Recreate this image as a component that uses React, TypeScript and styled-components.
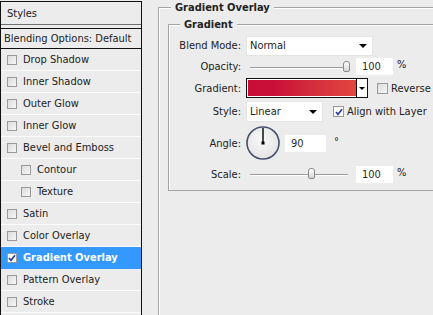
import React from "react";
import styled, { createGlobalStyle } from "styled-components";

const Global = createGlobalStyle`
  html, body { margin: 0; padding: 0; }
  body {
    background: #ececec;
    width: 433px;
    height: 315px;
    overflow: hidden;
    font-family: "DejaVu Sans Condensed", "Liberation Sans", sans-serif;
    font-size: 11px;
    color: #222;
  }
`;

const Page = styled.div`
  display: flex;
  width: 433px;
  height: 315px;
  overflow: hidden;
`;

/* ---------- left styles list ---------- */

const StylesPanel = styled.nav`
  flex: 0 0 142px;
  box-sizing: border-box;
  margin-top: 1px;
  border-left: 1px solid #111;
  border-right: 1px solid #111;
  display: flex;
  flex-direction: column;
`;

const PanelHeader = styled.div`
  height: 22px;
  border-top: 1px solid #111;
  border-bottom: 1px solid #6e6e6e;
  display: flex;
  align-items: center;
  padding-left: 6px;
  margin-bottom: 3px;
`;

const BlendingRow = styled.div`
  height: 19px;
  border-top: 1px solid #111;
  border-bottom: 1px solid #111;
  display: flex;
  align-items: center;
  padding-left: 3px;
  white-space: nowrap;
`;

const EffectRow = styled.div<{ $indent?: boolean; $active?: boolean }>`
  box-sizing: border-box;
  height: 22px;
  display: flex;
  align-items: center;
  gap: 6px;
  padding-left: ${(p) => (p.$indent ? 20 : 6)}px;
  border-bottom: 1px solid ${(p) => (p.$active ? "#3399ff" : "#fbfbfb")};
  background: ${(p) => (p.$active ? "#3399ff" : "transparent")};
  color: ${(p) => (p.$active ? "#fff" : "#222")};
  font-weight: ${(p) => (p.$active ? "bold" : "normal")};
  white-space: nowrap;
`;

const Box = styled.span<{ $on?: boolean; $size?: number }>`
  box-sizing: border-box;
  flex: 0 0 auto;
  width: ${(p) => p.$size ?? 10}px;
  height: ${(p) => p.$size ?? 10}px;
  border: 1px solid #9a9a9a;
  background: ${(p) => (p.$on ? "#fff" : "linear-gradient(135deg, #dcdcdc, #f6f6f6)")};
  display: inline-flex;
  align-items: center;
  justify-content: center;
`;

const Check = ({ on, size }: { on?: boolean; size?: number }) => (
  <Box $on={on} $size={size}>
    {on && (
      <svg width="8" height="8" viewBox="0 0 8 8">
        <path d="M1 4 L3 6.3 L7 1.2" fill="none" stroke="#2b3f9a" strokeWidth="1.7" />
      </svg>
    )}
  </Box>
);

/* ---------- right settings ---------- */

const Settings = styled.section`
  flex: 1 1 auto;
  min-width: 0;
  margin-left: 16px;
`;

const Group = styled.fieldset<{ $top: number; $pad: string; $h?: number }>`
  margin: ${(p) => p.$top}px -20px 0 0;
  padding: ${(p) => p.$pad};
  border: 1px solid #a4a4a4;
  box-shadow: inset 1px 1px 0 #fff;
  min-width: 0;
  ${(p) => (p.$h ? `height: ${p.$h}px;` : "")}
`;

const Legend = styled.legend<{ $offset: number }>`
  margin-left: ${(p) => p.$offset}px;
  padding: 0 4px;
  font-weight: bold;
  line-height: 13px;
  background: #ececec;
`;

const FormRow = styled.div<{ $h: number }>`
  display: grid;
  grid-template-columns: 72px auto;
  column-gap: 5px;
  align-items: center;
  height: ${(p) => p.$h}px;
`;

const Label = styled.span`
  text-align: right;
  white-space: nowrap;
`;

const Controls = styled.div`
  display: flex;
  align-items: center;
  white-space: nowrap;
`;

const Select = styled.div<{ $w: number; $h: number }>`
  box-sizing: border-box;
  width: ${(p) => p.$w}px;
  height: ${(p) => p.$h}px;
  background: #fff;
  border: 1px solid #e4e4e4;
  display: flex;
  align-items: center;
  justify-content: space-between;
  padding: 0 5px 0 3px;
`;

const Arrow = styled.span<{ $s?: number }>`
  width: 0;
  height: 0;
  border-left: ${(p) => p.$s ?? 4}px solid transparent;
  border-right: ${(p) => p.$s ?? 4}px solid transparent;
  border-top: ${(p) => p.$s ?? 4}px solid #000;
`;

const Slider = styled.div`
  position: relative;
  width: 104px;
  height: 14px;
  &::before {
    content: "";
    position: absolute;
    left: 4px;
    right: 2px;
    top: 7px;
    height: 1px;
    background: #9a9a9a;
    border-bottom: 1px solid #fff;
  }
`;

const Thumb = styled.span`
  position: absolute;
  top: 1px;
  width: 7px;
  height: 11px;
  margin-left: -4px;
  box-sizing: border-box;
  border: 1px solid #8a8a8a;
  border-radius: 3px 3px 2px 2px;
  background: linear-gradient(#ffffff, #d6d6d6);
`;

const NumberBox = styled.span<{ $w: number; $ml: number }>`
  box-sizing: border-box;
  width: ${(p) => p.$w}px;
  height: 17px;
  margin-left: ${(p) => p.$ml}px;
  padding-left: 6px;
  background: #fff;
  display: inline-flex;
  align-items: center;
  color: #2a2a2a;
`;

const Unit = styled.span<{ $raise?: boolean }>`
  margin-left: ${(p) => (p.$raise ? 8 : 4)}px;
  align-self: ${(p) => (p.$raise ? "flex-start" : "center")};
  margin-top: ${(p) => (p.$raise ? 9 : 0)}px;
  margin-bottom: ${(p) => (p.$raise ? 0 : 4)}px;
`;

const GradientPicker = styled.div`
  box-sizing: border-box;
  width: 122px;
  height: 20px;
  border: 1px solid #111;
  display: flex;
  background: #fff;
`;

const Swatch = styled.span`
  flex: 1 1 auto;
  border: 1px solid #fff;
  border-right: none;
  background: linear-gradient(90deg, #c80d35 0%, #c90f38 25%, #d32a3c 55%, #e2473f 100%);
`;

const SwatchArrow = styled.span`
  flex: 0 0 10px;
  border-left: 1px solid #111;
  display: flex;
  align-items: center;
  justify-content: center;
`;

const OptionLabel = styled.span<{ $ml: number }>`
  display: inline-flex;
  align-items: center;
  gap: 3px;
  margin-left: ${(p) => p.$ml}px;
`;

const Dial = ({ angle }: { angle: number }) => {
  const r = (angle * Math.PI) / 180;
  const x = 17 + Math.cos(r) * 15;
  const y = 17 - Math.sin(r) * 15;
  return (
    <svg width="35" height="35" viewBox="0 0 35 35">
      <defs>
        <radialGradient id="dialFill" cx="45%" cy="40%" r="65%">
          <stop offset="0%" stopColor="#f8f8f8" />
          <stop offset="100%" stopColor="#e2e2e2" />
        </radialGradient>
      </defs>
      <circle cx="17" cy="17" r="16" fill="url(#dialFill)" stroke="#45506b" strokeWidth="1.6" />
      <line x1="17" y1="17" x2={x} y2={y} stroke="#000" strokeWidth="1.4" />
      <rect x="15.5" y="15.5" width="3" height="3" fill="#000" />
    </svg>
  );
};

const effects: { name: string; indent?: boolean; on?: boolean }[] = [
  { name: "Drop Shadow" },
  { name: "Inner Shadow" },
  { name: "Outer Glow" },
  { name: "Inner Glow" },
  { name: "Bevel and Emboss" },
  { name: "Contour", indent: true },
  { name: "Texture", indent: true },
  { name: "Satin" },
  { name: "Color Overlay" },
  { name: "Gradient Overlay", on: true },
  { name: "Pattern Overlay" },
  { name: "Stroke" },
];

const thumbLeft = (v: number, min: number, max: number) => 4 + ((v - min) / (max - min)) * 97;

export default function App() {
  return (
    <>
      <Global />
      <Page>
        <StylesPanel>
          <PanelHeader>Styles</PanelHeader>
          <BlendingRow>Blending Options: Default</BlendingRow>
          {effects.map((e) => (
            <EffectRow key={e.name} $indent={e.indent} $active={e.on}>
              <Check on={e.on} />
              {e.name}
            </EffectRow>
          ))}
        </StylesPanel>

        <Settings>
          <Group $top={1} $pad="0 0 0 9px" $h={400}>
            <Legend $offset={3}>Gradient Overlay</Legend>
            <Group $top={4} $pad="4px 0 4px 0">
              <Legend $offset={11}>Gradient</Legend>
              <FormRow $h={21}>
                <Label>Blend Mode:</Label>
                <Controls>
                  <Select $w={127} $h={20}>
                    Normal
                    <Arrow />
                  </Select>
                </Controls>
              </FormRow>
              <FormRow $h={21}>
                <Label>Opacity:</Label>
                <Controls>
                  <Slider>
                    <Thumb style={{ left: thumbLeft(100, 0, 100) }} />
                  </Slider>
                  <NumberBox $w={37} $ml={6}>100</NumberBox>
                  <Unit>%</Unit>
                </Controls>
              </FormRow>
              <FormRow $h={22}>
                <Label>Gradient:</Label>
                <Controls>
                  <GradientPicker>
                    <Swatch />
                    <SwatchArrow>
                      <Arrow $s={3} />
                    </SwatchArrow>
                  </GradientPicker>
                  <OptionLabel $ml={9}>
                    <Check size={11} />
                    Reverse
                  </OptionLabel>
                </Controls>
              </FormRow>
              <FormRow $h={25}>
                <Label>Style:</Label>
                <Controls>
                  <Select $w={77} $h={21}>
                    Linear
                    <Arrow />
                  </Select>
                  <OptionLabel $ml={10}>
                    <Check on size={11} />
                    Align with Layer
                  </OptionLabel>
                </Controls>
              </FormRow>
              <FormRow $h={38}>
                <Label>Angle:</Label>
                <Controls>
                  <Dial angle={90} />
                  <NumberBox $w={41} $ml={4}>90</NumberBox>
                  <Unit $raise>°</Unit>
                </Controls>
              </FormRow>
              <FormRow $h={24}>
                <Label>Scale:</Label>
                <Controls>
                  <Slider>
                    <Thumb style={{ left: thumbLeft(100, 10, 150) }} />
                  </Slider>
                  <NumberBox $w={37} $ml={6}>100</NumberBox>
                  <Unit>%</Unit>
                </Controls>
              </FormRow>
            </Group>
          </Group>
        </Settings>
      </Page>
    </>
  );
}
